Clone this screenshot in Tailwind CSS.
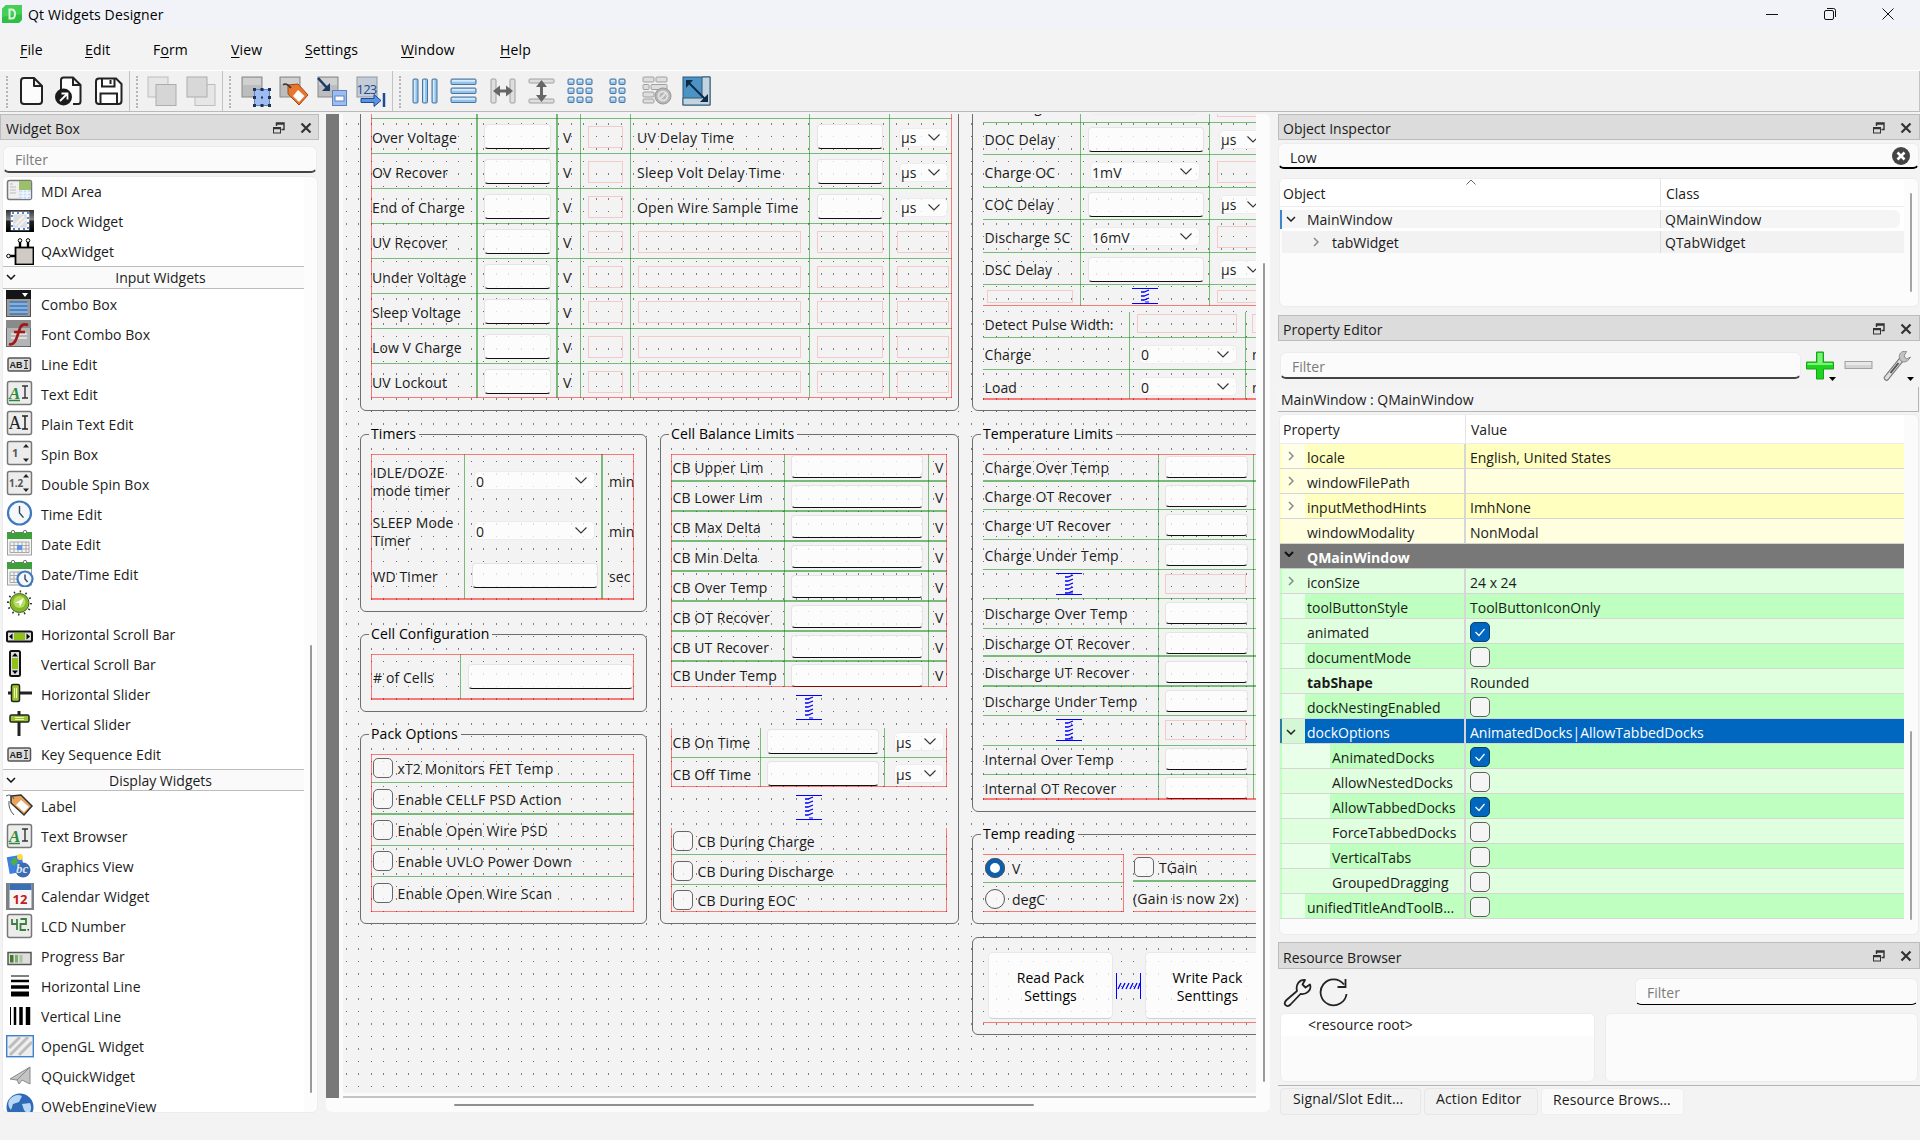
<!DOCTYPE html>
<html lang="en">
<head>
<meta charset="utf-8">
<title>Qt Widgets Designer</title>
<script src="https://cdn.jsdelivr.net/npm/@tailwindcss/browser@4"></script>
</head>
<body class="w-[1920px] h-[1140px] overflow-hidden bg-[#f3f3f3] font-['Open_Sans',sans-serif] text-[14px] leading-[18px] text-[#1b1b1b] whitespace-nowrap flex flex-col">

<!-- title bar -->
<header class="h-[28px] shrink-0 bg-[#f1f3f9] flex items-center pl-[2px] text-[14px] tracking-[0.12px]">
  <svg class="w-5 h-[18px]" viewBox="0 0 20 18"><path d="M4 0H20V15L17 18H0V4Z" fill="#2fbf45"/><path d="M4 0H20V9L0 12V4Z" fill="#45cf58"/><path d="M7.5 4.5V13.5H9.5C12 13.5 13 12 13 9S12 4.500 9.500 4.500Z" fill="none" stroke="#d9f7dc" stroke-width="2"/></svg>
  <span class="ml-[6px] mt-[2px] text-black">Qt Widgets Designer</span>
  <div class="ml-auto flex items-center pr-[26px] gap-[46px]">
    <svg class="w-3 h-3" viewBox="0 0 12 12"><path d="M0 6.500H12" stroke="#111" fill="none"/></svg>
    <svg class="w-3 h-3" viewBox="0 0 12 12"><g stroke="#111" fill="none"><rect x=".5" y="2.500" width="9" height="9" rx="1.500"/><path d="M3 .5H9.500Q11.500 .5 11.500 2.500V9"/></g></svg>
    <svg class="w-3 h-3" viewBox="0 0 12 12"><path d="M.5 .5L11.500 11.500M11.500 .5L.5 11.500" stroke="#111" fill="none"/></svg>
  </div>
</header>

<!-- menu bar -->
<nav class="h-[42px] shrink-0 flex items-center text-black pl-5 pt-[2px] tracking-[0.15px]">
  <span class="w-[65px]"><u class="underline-offset-2">F</u>ile</span>
  <span class="w-[68px]"><u class="underline-offset-2">E</u>dit</span>
  <span class="w-[78px]">F<u class="underline-offset-2">o</u>rm</span>
  <span class="w-[74px]"><u class="underline-offset-2">V</u>iew</span>
  <span class="w-[96px]"><u class="underline-offset-2">S</u>ettings</span>
  <span class="w-[99px]"><u class="underline-offset-2">W</u>indow</span>
  <span><u class="underline-offset-2">H</u>elp</span>
</nav>

<!-- tool bars -->
<div id="toolbar" class="h-[42px] shrink-0 flex border-t border-white border-b border-b-[#b9b9b9] bg-[#f1f1f1]"></div>

<main class="flex-1 flex min-h-0 pt-[2px]">
  <!-- widget box -->
  <aside class="w-[326px] shrink-0">
    <div class="w-[319px] h-[26px] bg-[#dcdcdc] border border-[#bcbcbc] flex items-center pl-[5px] pr-[6px]">
      <span class="mt-1">Widget Box</span><span class="ml-auto flex gap-[15px] mt-px dockbtns"></span>
    </div>
    <div class="ml-[3px] mt-[6px] w-[314px] h-[27px] bg-[#fbfbfb] rounded-md border border-[#ececec] border-b-2 border-b-[#444] flex items-center pl-[11px] text-[#7b7b7b]"><span class="mt-[2px]">Filter</span></div>
    <div class="ml-[2px] mt-[3px] w-[316px] h-[937px] bg-[#fcfcfc] rounded-md border border-[#ececec] flex overflow-hidden">
      <div id="widgets" class="w-[301px] bg-white"></div>
      <div class="ml-[6px] mt-[468px] w-[2px] h-[448px] bg-[#9a9a9a] rounded"></div>
    </div>
  </aside>

  <!-- form workspace -->
  <section class="w-[944px] h-[998px] shrink-0 bg-[#fcfcfc] rounded-md flex flex-col">
    <div class="flex h-[984px]">
      <div class="w-[13px] bg-[#787878]"></div>
      <div class="w-[917px] bg-[#fbfbfb] pl-[4px] flex flex-col">
        <div id="canvas" class="relative h-[979px] bg-[#f3f3f3] overflow-hidden tracking-[0.1px]">
          <svg class="absolute inset-0 w-full h-full"><defs><pattern id="dots" x="3" y="9" width="25" height="25" patternUnits="userSpaceOnUse"><g fill="#6a6a6a"><rect width="1" height="2" opacity=".85"/><rect x="12" width="1" height="2" opacity=".85"/><rect y="13" width="1" height="1"/><rect x="12" y="13" width="1" height="1"/></g></pattern></defs><rect width="100%" height="100%" fill="url(#dots)"/></svg>
        </div>
        <div class="mt-[3px] h-[2px] bg-[#c4c4c4] w-full"></div>
      </div>
      <div class="ml-[7px] mt-[149px] w-[2px] h-[819px] bg-[#9a9a9a] rounded"></div>
    </div>
    <div class="ml-[128px] mt-[6px] w-[580px] h-[2px] bg-[#909090] rounded"></div>
  </section>

  <!-- right docks -->
  <aside class="ml-[8px] w-[642px] shrink-0 flex flex-col">
    <div class="h-[26px] bg-[#dcdcdc] border border-[#bcbcbc] flex items-center pl-[4px] pr-[7px]">
      <span class="mt-1">Object Inspector</span><span class="ml-auto flex gap-[15px] mt-px dockbtns"></span>
    </div>
    <div class="mt-[3px] w-[641px] h-[26px] bg-[#fbfbfb] rounded-md border border-[#ececec] border-b-2 border-b-black flex items-center pl-[11px] pr-[8px]"><span class="mt-1">Low</span>
      <svg class="ml-auto w-[18px] h-[18px]" viewBox="0 0 18 18"><circle cx="9" cy="9" r="9" fill="#444"/><path d="M5.500 5.500L12.500 12.500M12.500 5.500L5.500 12.500" stroke="#fff" stroke-width="2.600"/></svg></div>
    <div class="ml-[1px] mt-[9px] w-[640px] h-[129px] bg-[#fcfcfc] rounded-md border border-[#ececec] flex overflow-hidden">
      <div class="w-[624px]">
        <div class="h-[28px] bg-white border-b border-[#ececec] flex items-center relative">
          <span class="w-[381px] pl-[3px] border-r border-[#e4e4e4] h-full flex items-center pt-[2px]">Object</span><span class="pl-[5px] pt-[2px]">Class</span>
          <svg class="absolute left-[186px] top-0 w-[10px] h-[6px]" viewBox="0 0 10 6"><path d="M.5 5.500L5 1L9.500 5.500" fill="none" stroke="#666"/></svg>
        </div>
        <div class="h-[24px] bg-white flex items-center">
          <span class="w-[2px] h-[19px] bg-[#3d87cf]"></span>
          <span class="w-[25px] h-[18px] bg-[#f5f5f5] flex items-center pl-[4px]"><svg class="w-[10px] h-[6px]" viewBox="0 0 10 6"><path d="M1 1L5 5L9 1" fill="none" stroke="#222" stroke-width="1.500"/></svg></span>
          <span class="w-[354px] h-[18px] bg-[#f5f5f5] border-r border-[#dcdcdc] pt-px">MainWindow</span>
          <span class="w-[239px] h-[18px] bg-[#f5f5f5] rounded-r-md pl-[4px] pt-px">QMainWindow</span>
        </div>
        <div class="h-[22px] ml-[2px] bg-[#f2f2f2] flex items-center">
          <span class="w-[379px] h-full border-r border-[#dcdcdc] flex items-center pl-[31px]"><svg class="w-[6px] h-[10px] mr-[13px]" viewBox="0 0 6 10"><path d="M1 1L5 5L1 9" fill="none" stroke="#888" stroke-width="1.500"/></svg><span class="mt-[2px]">tabWidget</span></span>
          <span class="pl-[4px] mt-[2px]">QTabWidget</span>
        </div>
      </div>
      <div class="ml-[6px] mt-[14px] w-[2px] h-[99px] bg-[#a4a4a4] rounded"></div>
    </div>
    <div class="mt-[8px] h-[26px] shrink-0 bg-[#dcdcdc] border border-[#bcbcbc] flex items-center pl-[4px] pr-[7px]">
      <span class="mt-1">Property Editor</span><span class="ml-auto flex gap-[15px] mt-px dockbtns"></span>
    </div>
    <div class="h-[46px] shrink-0 flex pl-[2px] pt-[11px]">
      <div class="w-[521px] h-[27px] bg-[#fbfbfb] rounded-md border border-[#ececec] border-b-2 border-b-[#444] flex items-center pl-[11px] text-[#7b7b7b]"><span class="mt-1">Filter</span></div>
      <svg class="ml-[5px] -mt-px w-[32px] h-[32px]" viewBox="0 0 32 32"><path d="M10.500 1H17.500V11H27.500V18H17.500V28H10.500V18H.5V11H10.500Z" fill="#1fd31f" stroke="#17a317"/><path d="M11.500 2H16.500V12H26.500V14H1.500V12H11.500Z" fill="#7df07d"/><path d="M23 26H30L26.500 30Z" fill="#000"/></svg>
      <svg class="ml-[6px] -mt-px w-[30px] h-[32px]" viewBox="0 0 30 32"><rect x="1" y="10.500" width="27" height="7" fill="#d4d4d4" stroke="#a2a2a2"/><rect x="2" y="11" width="25" height="3" fill="#e8e8e8"/></svg>
      <svg class="ml-[9px] -mt-px w-[32px] h-[32px]" viewBox="0 0 32 32"><path d="M3.500 27L18 9" stroke="#777" stroke-width="5.500" stroke-linecap="round"/><path d="M3.500 27L18 9" stroke="#dedede" stroke-width="3.500" stroke-linecap="round"/><path d="M7.500 22L15.500 12" stroke="#555" stroke-width="2"/><path d="M27.500 6L23.500 8L21 5L23.500 .5C18 -.5 15.500 3.500 16.500 7C17 12 24 13 27.500 6Z" fill="#c4c4c4" stroke="#8a8a8a"/><path d="M24 26H31L27.500 30Z" fill="#000"/></svg>
    </div>
    <div class="h-[25px] shrink-0 w-[641px] border-r border-b border-[#b4b4b4] bg-[#f4f4f4] pl-[3px] flex items-center"><span class="mt-[2px]">MainWindow : QMainWindow</span></div>
    <div class="ml-[1px] mt-[2px] w-[640px] h-[521px] shrink-0 bg-[#fbfbfb] rounded-md border border-[#ececec] flex overflow-hidden">
      <div class="w-[624px]">
        <div class="h-[29px] bg-white flex items-center border-b border-[#ececec]">
          <span class="w-[186px] h-full flex items-center pt-[2px] pl-[3px] border-r border-[#e4e4e4]">Property</span><span class="pl-[5px] pt-[2px]">Value</span>
        </div>
        <div id="props"></div>
      </div>
      <div class="ml-[6px] mt-[316px] w-[2px] h-[189px] bg-[#a4a4a4] rounded"></div>
    </div>
    <div class="mt-[7px] h-[27px] shrink-0 bg-[#dcdcdc] border border-[#bcbcbc] flex items-center pl-[4px] pr-[7px]">
      <span class="mt-1">Resource Browser</span><span class="ml-auto flex gap-[15px] dockbtns"></span>
    </div>
    <div class="h-[44px] shrink-0 flex pl-[5px] pt-[9px]">
      <svg class="w-[30px] h-[30px]" viewBox="0 0 30 30"><path d="M14 13C12.500 7 16 1.500 22 2L19.500 6.500L22.500 9.500L27 6.500C29 12 23.500 17 17.500 16L7.500 26.500Q4.500 29.500 2.500 27Q.5 25 3.500 22Z" fill="none" stroke="#222" stroke-width="1.800" stroke-linejoin="round"/></svg>
      <svg class="ml-[6px] w-[30px] h-[30px]" viewBox="0 0 30 30"><path d="M27.500 16A13 13 0 1 1 25 6.500M26.500 1V9H18.500" fill="none" stroke="#222" stroke-width="1.800"/></svg>
      <div class="ml-auto mr-[2px] w-[283px] h-[27px] bg-[#fbfbfb] rounded-md border border-[#ececec] border-b-black flex items-center pl-[11px] text-[#7b7b7b]"><span class="mt-[2px]">Filter</span></div>
    </div>
    <div class="flex gap-[10px] pl-[2px] h-[73px] shrink-0 border-b border-[#b4b4b4]">
      <div class="w-[315px] h-[69px] rounded-md border border-[#ececec] bg-[#fbfbfb] overflow-hidden"><div class="h-[22px] bg-white pl-[27px] leading-[22px]">&lt;resource root&gt;</div></div>
      <div class="w-[313px] h-[69px] rounded-md border border-[#ececec] bg-[#fbfbfb]"></div>
    </div>
    <div class="flex gap-[3px] pl-[2px] pt-[2px] h-[29px] tracking-[0.12px]">
      <span class="w-[141px] rounded border border-[#e6e6e6] bg-[#f2f2f2] pl-[12px] pt-[1px]">Signal/Slot Edit...</span>
      <span class="w-[114px] rounded border border-[#e6e6e6] bg-[#f2f2f2] pl-[11px] pt-[1px]">Action Editor</span>
      <span class="w-[143px] rounded border border-[#efefef] bg-[#fafafa] pl-[11px] pt-[2px]">Resource Brows...</span>
    </div>
  </aside>
</main>

<script>
/* ---------- dock title buttons ---------- */
document.querySelectorAll('.dockbtns').forEach(e => e.innerHTML =
  `<svg class="w-[12px] h-[12px]" viewBox="0 0 12 12"><g fill="none" stroke="#333"><rect x=".5" y="5.500" width="7" height="5.500"/><path d="M.5 6.500H7.500M3.500 4V1H11V7.500H8.500M3.500 2H11" stroke-width="1.400"/></g></svg>
   <svg class="w-[12px] h-[12px]" viewBox="0 0 12 12"><path d="M1.500 1.500L10.500 10.500M10.500 1.500L1.500 10.500" stroke="#333" stroke-width="2.200"/></svg>`);

/* ---------- tool bar ---------- */
const gray = '<rect x="1" y="1" width="20" height="20" fill="#bdbdbd" stroke="#8a8a8a"/><rect x="2" y="2" width="18" height="7" fill="#d0d0d0"/>';
const bluebar = (x, y, w, h) => `<rect x="${x}" y="${y}" width="${w}" height="${h}" rx="1" fill="#8fc3f0" stroke="#4f7396"/><rect x="${x + 1}" y="${y + 1}" width="${Math.max(1, w > h ? w - 2 : w / 2 - 1)}" height="${Math.max(1, h > w ? h - 2 : h / 2 - 1)}" fill="#d6ebfb"/>`;
const gbar = (x, y, w, h) => `<rect x="${x}" y="${y}" width="${w}" height="${h}" rx="1" fill="#dedede" stroke="#a0a0a0"/>`;
let cellsGrid = '', cellsForm = '', cellsBreak = '';
for (let r = 0; r < 3; r++) {
  for (let c = 0; c < 3; c++) cellsGrid += bluebar(2 + c * 9, 3 + r * 9, 6, 5.5);
  cellsForm += bluebar(7, 3 + r * 9, 6, 5.5) + bluebar(16, 3 + r * 9, 6, 5.5);
}
[[1,1,11,5],[14,1,11,5],[1,8.5,6,5],[9,8.5,16,5],[1,16,11,5],[1,23,11,4]].forEach(a => cellsBreak += gbar(...a));
const T = {
  file: '<path d="M5 2H15L23 10V25Q23 28 20 28H5Q2 28 2 25V5Q2 2 5 2ZM15 2V10H23" fill="#fcfcfc" stroke="#222" stroke-width="2" stroke-linejoin="round"/>',
  open: '<path d="M7 14V4Q7 1.500 9.500 1.500H19L26.500 9V25.500Q26.500 28 24 28H19M19 1.500V9H26.500" fill="#fcfcfc" stroke="#222" stroke-width="2"/><circle cx="9.500" cy="21" r="8.500" fill="#1a1a1a"/><path d="M6 25L13 18M7.500 17.500H13.500V23.500" stroke="#fff" stroke-width="1.800" fill="none"/>',
  save: '<path d="M4 2.500H21L26.500 8V25Q26.500 28 23.500 28H4Q1 28 1 25V5.500Q1 2.500 4 2.500Z" fill="#fff" stroke="#222" stroke-width="2"/><path d="M7 2.500V10.500H19.500V2.500M5.500 28V17.500H22V28M15.500 4V8" fill="none" stroke="#222" stroke-width="2"/>',
  back: '<rect x="1" y="1" width="20" height="20" fill="#e6e6e6" stroke="#bdbdbd"/><rect x="9" y="8.500" width="20" height="21" fill="#d6d6d6" stroke="#adadad"/>',
  front: '<rect x="9" y="8.500" width="20" height="21" fill="#e6e6e6" stroke="#bdbdbd"/><rect x="1" y="1" width="20" height="20" fill="#d8d8d8" stroke="#adadad"/>',
  edit: gray + '<rect x="13.500" y="13.500" width="15" height="16" fill="#9dbdf0" stroke="#5f82bd"/><g fill="#1f3358"><rect x="12" y="12" width="3" height="3"/><rect x="19.500" y="12" width="3" height="3"/><rect x="27" y="12" width="3" height="3"/><rect x="12" y="20" width="3" height="3"/><rect x="27" y="20" width="3" height="3"/><rect x="12" y="28" width="3" height="3"/><rect x="19.500" y="28" width="3" height="3"/><rect x="27" y="28" width="3" height="3"/><rect x="20" y="20.500" width="2" height="2"/></g>',
  signal: gray + '<path d="M9 9L19 8L29 19L20 29L9 18Z" fill="#e8762c" stroke="#9a4a16"/><path d="M19 14L25.500 20L20 26L14 20Z" fill="#fff"/><path d="M4 9Q7 6 12 12" fill="none" stroke="#333" stroke-width="1.500"/>',
  buddy: gray + '<rect x="15.500" y="14.500" width="14" height="15" fill="#9dbdf0" stroke="#5f82bd"/><rect x="18" y="20" width="9" height="5" fill="#fff" stroke="#5f82bd"/><path d="M1 2L11 13" stroke="#1d3a66" stroke-width="2.600"/><path d="M13 7V15H5Z" fill="#1d3a66"/>',
  tab: '<rect x="1" y="1" width="20" height="20" fill="#c4ccd6" stroke="#8d97a5"/><text x=".5" y="18" font-family="Open Sans" font-size="13" letter-spacing="-.8" fill="#1c4a94">123</text><path d="M5 22.500H18V18.500L25 24.500L18 30.500V26.500H5Z" fill="#5b93e0" stroke="#1c4a94"/><path d="M28 17V31" stroke="#1c4a94" stroke-width="2.500"/>',
  cols: bluebar(2, 3, 5, 24) + bluebar(11.5, 3, 5, 24) + bluebar(21, 3, 5, 24),
  rows: bluebar(2, 3, 25, 5.5) + bluebar(2, 12, 25, 5.5) + bluebar(2, 21, 25, 5.5),
  hs: gbar(2, 3, 5, 24) + gbar(21, 3, 5, 24) + '<path d="M4 15L11 9.500V13.500H17V9.500L24 15L17 20.500V16.500H11V20.500Z" fill="#666"/>',
  vs: gbar(2, 3, 25, 4) + gbar(2, 23, 25, 4) + '<path d="M14.500 4L20 11H16V19H20L14.500 26L9 19H13V11H9Z" fill="#666"/>',
  grid: cellsGrid, form: cellsForm,
  brk: cellsBreak + '<circle cx="21" cy="20" r="8" fill="#b5b5b5" stroke="#999"/><circle cx="21" cy="20" r="4.500" fill="none" stroke="#e0e0e0" stroke-width="2"/><path d="M18 23L24 17" stroke="#e0e0e0" stroke-width="2"/>',
  adj: '<rect x="1" y="1" width="27" height="28" fill="#4a93c4" stroke="#2f5877"/><path d="M20 1H28V29H1V22H20Z" fill="#c3d3df" stroke="#2f5877"/><path d="M6 6L23 23" stroke="#0f2c44" stroke-width="2"/><path d="M4 4H11L4 12ZM26 26H18L26 18Z" fill="#0f2c44"/>'
};
const bars = [
  [130, [['file', 19], ['open', 54], ['save', 95]]],
  [93, [['back', 147], ['front', 186]]],
  [170, [['edit', 241], ['signal', 279], ['buddy', 317], ['tab', 356]]],
  [1527, [['cols', 411], ['rows', 449], ['hs', 489], ['vs', 527], ['grid', 566], ['form', 603], ['brk', 642], ['adj', 682]]]
];
let barX = 0;
document.getElementById('toolbar').innerHTML = bars.map(([w, items]) => {
  let cur = barX + 9;
  const html = items.map(([n, x]) => {
    const m = x - cur; cur = x + 31;
    return `<svg class="w-[31px] h-[31px] shrink-0 mt-[5px]" style="margin-left:${m}px" viewBox="0 0 31 31">${T[n]}</svg>`;
  }).join('');
  barX += w;
  return `<div class="flex shrink-0 border-r border-[#c2c2c2] pl-[6px]" style="width:${w}px"><span class="w-[3px] shrink-0 mt-[5px] h-[32px] border-l-2 border-dotted border-[#b5b5b5]"></span>${html}</div>`;
}).join('');

/* ---------- widget box ---------- */
const frame = '<rect x="1.500" y="1.500" width="24" height="23" rx="2" fill="#ececec" stroke="#777" stroke-width="1.500"/>';
const serif = 'font-family="Liberation Serif"';
const green = 'fill="#9ac52f" stroke="#222" stroke-width="1.500"';
const clock = (cx, cy, r) => `<circle cx="${cx}" cy="${cy}" r="${r}" fill="#f4f7fb" stroke="#3f78bd" stroke-width="2.200"/><path d="M${cx} ${cy - r * .6}V${cy}L${cx + r * .35} ${cy + r * .4}" fill="none" stroke="#345" stroke-width="1.400"/>`;
const cal = '<rect x="1.500" y="4" width="24" height="21" fill="#f4f4f4" stroke="#a0a0a0"/><rect x="1" y="2" width="25" height="7" fill="#3f9f3a"/><circle cx="7" cy="2" r="1.700" fill="#eee" stroke="#777"/><circle cx="19" cy="2" r="1.700" fill="#eee" stroke="#777"/><path d="M4 12H23M4 15.500H23M4 19H23M4 22.500H23M4 12V22.500M8 12V22.500M12 12V22.500M16 12V22.500M20 12V22.500M23 12V22.500" stroke="#a9a9a9"/>';
const abi = '<rect x="2" y="8" width="22.500" height="13" rx="1.500" fill="#dcdcdc" stroke="#555" stroke-width="1.500"/><text x="3.500" y="18" font-family="Liberation Sans" font-size="9" font-weight="bold" fill="#222">AB</text><path d="M18 10.500H22M20 10.500V18.500M18 18.500H22" stroke="#222"/>';
const I = {
  mdi: '<rect x="1.500" y="2.500" width="24" height="19" rx="2" fill="#f0f0f0" stroke="#777" stroke-width="1.500"/><rect x="13" y="3" width="12" height="9" fill="#9cc06a"/><rect x="13" y="12.500" width="12" height="8.500" fill="#c9dbf5"/><path d="M13 15H25M13 18H25M17 12V21M21 12V21" stroke="#fff"/><path d="M4 6H7M4 9H10M4 12H10M4 15H10" stroke="#bbb"/>',
  dock: '<defs><linearGradient id="dk" x2="0" y2="1"><stop offset="0" stop-color="#333"/><stop offset=".45" stop-color="#8a8a8a"/><stop offset=".5" stop-color="#222"/><stop offset="1" stop-color="#000"/></linearGradient></defs><rect y="2" width="28" height="22" fill="url(#dk)"/><rect x="6" y="5" width="16" height="16" fill="#dedede" stroke="#fff" stroke-width="2.500"/><rect x="6" y="5" width="16" height="16" fill="none" stroke="#4f86d8" stroke-width="1.800" stroke-dasharray="2 3"/><path d="M9 17L18 8M12 19L20 11" stroke="#f2f2f2" stroke-width="2"/>',
  ax: '<rect x="9.500" y="9.500" width="18" height="17" fill="#cfcbc4" stroke="#000" stroke-width="1.800"/><path d="M14 9V4M22 9V4M9 18H4" stroke="#000" stroke-width="2.400"/><circle cx="14" cy="2.500" r="1.800" fill="#fff" stroke="#000"/><circle cx="22" cy="2.500" r="1.800" fill="#fff" stroke="#000"/><circle cx="2.500" cy="18" r="1.800" fill="#fff" stroke="#000"/>',
  combo: '<rect x=".5" y="0" width="24" height="26.500" fill="#9a9a9a" stroke="#555"/><rect width="25" height="9" fill="#151515"/><path d="M16 3H22L19 7Z" fill="#fff"/><rect x="3.500" y="12" width="18" height="12" fill="#7fb0e6"/><path d="M3.500 12H21.500M3.500 16H21.500M3.500 20H21.500M3.500 24H21.500" stroke="#4a74a5" stroke-width="1.300"/>',
  font: `<rect x=".5" y=".5" width="24" height="26" fill="#b4b4b4" stroke="#666"/><rect width="25" height="8" fill="#8a8a8a"/><path d="M5 14H21M5 18H21" stroke="#ddd" stroke-width="2"/><path d="M3 24Q8 26 11 17L14 8Q16 3 22 5M8 12H19" fill="none" stroke="#a01818" stroke-width="2.600"/>`,
  line: abi,
  text: frame + `<text x="3" y="18.500" ${serif} font-size="17" font-weight="bold" font-style="italic" fill="#2c8a3c">A</text><path d="M3 20.500H14" stroke="#2c8a3c" stroke-width="1.500"/><path d="M16 6H22M19 6V18M16 18H22" stroke="#333" stroke-width="1.400"/>`,
  plain: frame + `<text x="2.500" y="19" ${serif} font-size="18" fill="#222">A</text><path d="M16 6H22M19 6V19M16 19H22" stroke="#222" stroke-width="1.500"/>`,
  spin: frame + '<text x="6" y="17" font-family="Open Sans" font-size="11" font-weight="bold" fill="#555">1</text><path d="M17 7.500H23L20 4ZM17 18.500H23L20 22Z" fill="#222"/>',
  dspin: frame + '<text x="3" y="17" font-family="Open Sans" font-size="10" font-weight="bold" fill="#555">1.2</text><path d="M17 7.500H23L20 4ZM17 18.500H23L20 22Z" fill="#222"/>',
  time: clock(13.5, 13, 11.5),
  date: cal + '<rect x="11" y="15" width="5" height="5" fill="#5d94e8"/>',
  dt: cal + clock(19, 19, 7.5),
  dial: '<circle cx="13.500" cy="13" r="11.500" fill="none" stroke="#333" stroke-width="2" stroke-dasharray="1.500 4.500"/><circle cx="13.500" cy="13" r="9.500" fill="#86b82e" stroke="#44611a"/><circle cx="13.500" cy="12" r="6" fill="#b7dd5c"/><path d="M9 13L18 8L14 17L13 13Z" fill="#fff"/>',
  hsb: '<rect x="1" y="11.500" width="25" height="10" rx="1.500" fill="#ddd" stroke="#111" stroke-width="2"/><rect x="8" y="13" width="11" height="7" fill="#8fc11a"/><path d="M6.500 13.500V19.500L3 16.500ZM20.500 13.500V19.500L24 16.500Z" fill="#000"/>',
  vsb: '<rect x="4" y="1" width="10" height="25" rx="1.500" fill="#ddd" stroke="#111" stroke-width="2"/><rect x="6" y="8" width="6" height="11" fill="#8fc11a"/><path d="M6 6.500H12L9 3ZM6 20.500H12L9 24Z" fill="#000"/>',
  hsl: `<path d="M2 13H26" stroke="#222" stroke-width="3"/><rect x="5.500" y="4.500" width="8" height="17" rx="1.500" ${green}/><path d="M8.500 8V18M10.500 8V18" stroke="#eaf7b8"/>`,
  vsl: `<path d="M13 1V26" stroke="#222" stroke-width="3"/><rect x="4" y="5" width="19" height="7" rx="1.500" ${green}/><path d="M9 7.500H18M9 9.500H18" stroke="#eaf7b8"/>`,
  label: '<path d="M5 3L15 2L26 13L18 22L5 10Z" fill="#e8a35c" stroke="#333" stroke-width="1.500"/><path d="M15 7L23 14L18 19L10 12Z" fill="#fff"/><path d="M0 3Q5 0 8 6M3 8Q2 16 8 22" fill="none" stroke="#555"/>',
  gv: '<rect x="2" y="3" width="15" height="17" fill="#3f7fe0" transform="rotate(-10 9 11)"/><path d="M4 9L9 4L12 9L8 13Z" fill="#4cb045"/><circle cx="14" cy="4" r="3" fill="#ffd94a"/><circle cx="17" cy="17" r="7.500" fill="#3c6bb0"/><text x="10" y="20" font-family="Liberation Serif" font-size="13" font-weight="bold" font-style="italic" fill="#dbe6f7">bc</text>',
  cw: '<rect x="0" y="0" width="28" height="27" fill="#7b8085"/><rect x="3.500" y="1" width="22" height="24" fill="#f6f6f6"/><rect x="3.500" y="1" width="22" height="6" fill="#3a6fb5"/><text x="6.500" y="21" font-family="Open Sans" font-size="13" font-weight="bold" fill="#c02020">12</text>',
  lcd: frame + '<path d="M6 6V11H11M11 6V17M14.500 6H20V11H14.500V17H20" fill="none" stroke="#3c7f3c" stroke-width="1.800"/><rect x="21.500" y="16" width="1.500" height="1.500" fill="#333"/>',
  pb: '<rect x="2" y="9.500" width="23" height="12" fill="#dedede" stroke="#555" stroke-width="1.500"/><rect x="4" y="12" width="3.500" height="7.500" fill="#3f7d28"/><rect x="9" y="12" width="3" height="7.500" fill="#7fae6c"/><rect x="13.500" y="12" width="3" height="7.500" fill="#a9c69c"/>',
  hl: '<path d="M5 3H23" stroke="#000"/><path d="M5 8H23" stroke="#000" stroke-width="2.500"/><path d="M5 14H23" stroke="#000" stroke-width="3.500"/><path d="M5 21H23" stroke="#000" stroke-width="5"/>',
  vl: '<path d="M4.500 4V22" stroke="#000"/><path d="M9 4V22" stroke="#000" stroke-width="2.500"/><path d="M15 4V22" stroke="#000" stroke-width="3.500"/><path d="M22 4V22" stroke="#000" stroke-width="4.500"/>',
  gl: '<rect x=".7" y="2.700" width="26.600" height="21" fill="#eee" stroke="#3f7fd0" stroke-width="1.400"/><path d="M3 15L14 4M4 22L22 4M13 22L26 9" stroke="#bdbdbd" stroke-width="3"/>',
  qq: '<path d="M4 16L24 4V21L16 17L13 21L11 17Z" fill="#c4c4c4" stroke="#8a8a8a"/><path d="M24 4L11 17" stroke="#888"/>',
  web: '<circle cx="14" cy="14" r="13.500" fill="#2f6ab8"/><path d="M4 6Q10 0 16 3L13 9L7 11L5 17Q0 11 4 6ZM16 11L24 10Q27 16 22 22L18 17Z" fill="#b8d8f5"/>'
};
const row = ([i, t]) => `<div class="h-[30px] flex items-center pl-[3px]"><svg class="w-[28px] h-[27px] shrink-0" viewBox="0 0 28 27">${I[i]}</svg><span class="ml-[7px] mt-[2px] tracking-[0.05px]">${t}</span></div>`;
const head = t => `<div class="h-[22.500px] border-y border-[#bdbdbd] bg-[#fafafa] flex items-center"><svg class="w-[10px] h-[6px] ml-[3px]" viewBox="0 0 10 6"><path d="M1 1L5 5L9 1" fill="none" stroke="#111" stroke-width="1.500"/></svg><span class="flex-1 text-center pl-[1px] pt-[2px]">${t}</span></div>`;
document.getElementById('widgets').innerHTML = '<div class="-mt-[1px]"></div>' +
  [['mdi', 'MDI Area'], ['dock', 'Dock Widget'], ['ax', 'QAxWidget']].map(row).join('') + head('Input Widgets') +
  [['combo', 'Combo Box'], ['font', 'Font Combo Box'], ['line', 'Line Edit'], ['text', 'Text Edit'], ['plain', 'Plain Text Edit'], ['spin', 'Spin Box'], ['dspin', 'Double Spin Box'], ['time', 'Time Edit'], ['date', 'Date Edit'], ['dt', 'Date/Time Edit'], ['dial', 'Dial'], ['hsb', 'Horizontal Scroll Bar'], ['vsb', 'Vertical Scroll Bar'], ['hsl', 'Horizontal Slider'], ['vsl', 'Vertical Slider'], ['line', 'Key Sequence Edit']].map(row).join('') + head('Display Widgets') +
  [['label', 'Label'], ['text', 'Text Browser'], ['gv', 'Graphics View'], ['cw', 'Calendar Widget'], ['lcd', 'LCD Number'], ['pb', 'Progress Bar'], ['hl', 'Horizontal Line'], ['vl', 'Vertical Line'], ['gl', 'OpenGL Widget'], ['qq', 'QQuickWidget'], ['web', 'QWebEngineView']].map(row).join('');

/* ---------- property table ---------- */
const on = '<span class="w-5 h-5 rounded-[5px] bg-[#0067c0] border border-[#11406b] flex items-center justify-center"><svg class="w-3 h-3" viewBox="0 0 12 12"><path d="M1.500 6L5 9.500L10.500 3" fill="none" stroke="#fff" stroke-width="1.200"/></svg></span>';
const off = '<span class="w-5 h-5 rounded-[5px] bg-[#f5f5f5] border border-[#5f5f5f]"></span>';
const chevR = '<svg class="w-[6px] h-[10px] ml-[6px]" viewBox="0 0 6 10"><path d="M1 1L5 5L1 9" fill="none" stroke="#888" stroke-width="1.500"/></svg>';
const chevD = '<svg class="w-[10px] h-[6px] ml-[4px] mt-px" viewBox="0 0 10 6"><path d="M1 1L5 5L9 1" fill="none" stroke="#222" stroke-width="1.500"/></svg>';
const props = [
  ['Y', 'locale', 'English, United States', '>'], ['y', 'windowFilePath', '', '>'], ['Y', 'inputMethodHints', 'ImhNone', '>'], ['y', 'windowModality', 'NonModal'],
  ['H', 'QMainWindow'],
  ['g', 'iconSize', '24 x 24', '>'], ['G', 'toolButtonStyle', 'ToolButtonIconOnly'], ['g', 'animated', on], ['G', 'documentMode', off], ['g', '<b>tabShape</b>', 'Rounded'], ['G', 'dockNestingEnabled', off],
  ['S', 'dockOptions', 'AnimatedDocks|AllowTabbedDocks'],
  ['G', 'AnimatedDocks', on, 2], ['g', 'AllowNestedDocks', off, 2], ['G', 'AllowTabbedDocks', on, 2], ['g', 'ForceTabbedDocks', off, 2], ['G', 'VerticalTabs', off, 2], ['g', 'GroupedDragging', off, 2], ['G', 'unifiedTitleAndToolB...', off]
];
const bg = { Y: 'bg-[#ffffbf]', y: 'bg-[#ffffdf]', G: 'bg-[#bfffbf]', g: 'bg-[#dfffdf]', S: 'bg-[#0067c0] text-white' };
const ind = { Y: 'bg-[#ffffe9] border-[#ffffbf]', y: 'bg-[#ffffdf] border-[#ffffbf]', G: 'bg-[#e9ffe9] border-[#bfffbf]', g: 'bg-[#dfffdf] border-[#bfffbf]', S: 'bg-[#d5f7d5] border-[#2a7f9c]' };
document.getElementById('props').innerHTML = props.map(([k, n, v, x]) => k === 'H'
  ? `<div class="h-[25px] bg-[#787878] text-white font-bold flex items-center border-b border-[#c8c8c8]"><svg class="w-[10px] h-[6px] ml-[4px] mr-[13px] -mt-[4px]" viewBox="0 0 10 6"><path d="M1 1L5 5L9 1" fill="none" stroke="#111" stroke-width="2"/></svg><span class="mt-[3px]">${n}</span></div>`
  : `<div class="h-[25px] flex border-b border-[#d6d6d6] ${bg[k]}"><span class="${x === 2 ? 'w-[50px]' : 'w-[25px]'} shrink-0 border-l-2 flex items-center ${ind[k]}">${k === 'S' ? chevD : x === '>' ? chevR : ''}</span><span class="${x === 2 ? 'w-[136px]' : 'w-[161px]'} shrink-0 border-r-2 border-[#d6d6d6] pl-[2px] pt-[5px] overflow-hidden">${n}</span><span class="pl-[4px] flex ${v && v[0] === '<' ? 'pt-[3px]' : 'pt-[5px]'}">${v}</span></div>`).join('');

/* ---------- form being designed ---------- */
const canvas = document.getElementById('canvas');
const OX = 343, OY = 114;               // workspace origin on the desktop
const GREEN = 'rgba(0,128,0,.5)', RED = 'rgba(255,0,0,.5)';
const add = h => canvas.insertAdjacentHTML('beforeend', h);
const at = (x, y, w, h) => `left:${x - OX}px;top:${y - OY}px;width:${w}px;height:${h}px`;

const group = (x, y, w, h, title) => add(`<div class="absolute rounded-[6px] border-[1.500px] border-[#6e6e6e]" style="${at(x, y, w, h)}">${title ? `<span class="absolute left-[8px] -top-[10px] h-[19px] pl-[2px] pr-[3px] bg-[#f3f3f3] text-black">${title}</span>` : ''}</div>`);

const L = t => `<span class="leading-[17.500px] mt-[2px]">${t}</span>`;
const E = (h = 25) => `<span class="flex-1 rounded-[4px] border border-[#e4e4e4] border-b-[1.500px] border-b-[#111] bg-white/75" style="height:${h}px"></span>`;
const C = t => `<span class="flex-1 h-[19px] rounded-[5px] border border-[#ededed] bg-white/75 flex items-center pl-px pr-[7px]"><span class="mt-[2px]">${t}</span><svg class="ml-auto w-[12px] h-[7px]" viewBox="0 0 12 7"><path d="M.5 .5L6 6L11.500 .5" fill="none" stroke="#333" stroke-width="1.100"/></svg></span>`;
const X = (h = 22) => `<span class="flex-1 border border-[#f3caca]" style="height:${h}px"></span>`;
const K = t => `<span class="w-5 h-5 shrink-0 rounded-[5px] border border-[#666] bg-[#f8f8f8]/80"></span><span class="ml-[5px] mt-[2px]">${t}</span>`;
const R = (t, c) => `<span class="w-5 h-5 shrink-0 rounded-full border ${c ? 'border-[5px] border-[#0a5fae] bg-white outline -outline-offset-1 outline-[#555]' : 'border-[#555] bg-[#f8f8f8]/80'}"></span><span class="ml-[7px] mt-[2px]">${t}</span>`;
const vspring = (h, cls = '') => {
  let z = ''; for (let y = 3; y < h - 2; y += 4) z += `M9 ${y + 1}H12L17 ${y - 1}`;
  return `<svg class="w-[26px] ${cls}" style="height:${h}px" viewBox="0 0 26 ${h}"><path d="M0 .5H26M0 ${h - .5}H26M13 ${h - 2}H17" stroke="#00f" stroke-width="1"/><path d="${z}" stroke="#00f" stroke-width="1.300" fill="none"/></svg>`;
};

/* A layout: columns are [width, padLeft, padRight]; sides lists the outline edges drawn in red;
   dy nudges the content of each row off its centre. */
function layout(x, y, cols, rows, cells, { sides = '', boldC = [], boldR = [], noR, noC, boldB, dy = 0 } = {}) {
  const W = cols.reduce((a, c) => a + c[0], 0), H = rows.reduce((a, b) => a + b, 0);
  let s = '', p = 0;
  if (!noC) cols.slice(0, -1).forEach((c, i) => { p += c[0]; const b = boldC.includes(i); s += `<rect x="${b ? p - 1 : p}" y="0" width="${b ? 2 : 1}" height="${H}" fill="${GREEN}"/>`; });
  p = 0;
  if (!noR) rows.slice(0, -1).forEach((r, i) => { p += r; const b = boldR.includes(i); s += `<rect x="0" y="${b ? p - 1 : p}" width="${W}" height="${b ? 2 : 1}" fill="${GREEN}"/>`; });
  if (sides.includes('t')) s += `<rect width="${W}" height="1" fill="${RED}"/>`;
  if (sides.includes('b')) s += `<rect y="${H - 1}" width="${W}" height="${boldB ? 2 : 1}" fill="${RED}"/>`;
  if (sides.includes('l')) s += `<rect width="1" height="${H}" fill="${RED}"/>`;
  if (sides.includes('r')) s += `<rect x="${W - 1}" width="1" height="${H}" fill="${RED}"/>`;
  const body = cells.map((r, j) => {
    const d = 2 * (Array.isArray(dy) ? dy[j] : dy);
    return r.map((c, i) => `<div class="flex items-center min-w-0" style="padding:${Math.max(0, d)}px ${cols[i][2] || 0}px ${Math.max(0, -d)}px ${cols[i][1] || 0}px">${c}</div>`).join('');
  }).join('');
  add(`<div class="absolute" style="${at(x, y, W, H)}"><div class="grid" style="grid-template-columns:${cols.map(c => c[0] + 'px').join(' ')};grid-template-rows:${rows.map(r => r + 'px').join(' ')}">${body}</div><svg class="absolute left-0 top-0 w-full overflow-visible" style="height:${H}px">${s}</svg></div>`);
}
const rep = (n, v) => Array(n).fill(v);

// voltage limits
group(360, 60, 599, 351);
const colsA = [[106, 1], [80, 7, 6], [23, 7], [50, 8, 7], [179, 8, 8], [80, 8, 6], [63, 8, 3]];
const volts = ['Over Voltage', 'OV Recover', 'End of Charge', 'UV Recover', 'Under Voltage', 'Sleep Voltage', 'Low V Charge', 'UV Lockout'];
const delays = ['UV Delay Time', 'Sleep Volt Delay Time', 'Open Wire Sample Time'];
layout(371, 83, colsA, rep(9, 35), [rep(7, '')].concat(volts.map((v, i) => [L(v), E(), `<span class="-ml-px flex">${L('V')}</span>`, X(), ...(i < 3 ? [`<span class="-ml-px flex tracking-[0.2px]">${L(delays[i])}</span>`, E(), `<span class="flex flex-1 pl-[2px] pr-[1px] pt-px">${C('µs')}</span>`] : [X(), X(), X()])])), { sides: 'lrb', boldC: [0, 1], dy: 1 });

// current limits
group(972, 60, 400, 351);
const colsB = [[97, 1.5], [129, 8, 5], [80, 8, 0]];
const us = `<span class="flex w-[48px] ml-[2px]">${C('µs')}</span>`;
const cb = t => `<span class="flex flex-1 pl-[2px] pr-[4px]">${C(t)}</span>`;
layout(983, 89, colsB, [33, 32, 33, 32, 33, 32, 22], [
  [L('Discharge OC'), cb(''), X()],
  [L('DOC Delay'), E(), us], [L('Charge OC'), cb('1mV'), X()], [L('COC Delay'), E(), us], [L('Discharge SC'), cb('16mV'), X()], [L('DSC Delay'), E(), us],
  [`<span class="flex flex-1 pl-[2px] pr-[7px]">${X(13)}</span>`, vspring(16, 'ml-[44px]'), X(13)]], { sides: 'b', dy: [0, 1, 1, 1, 1, 1, 1] });
layout(983, 312, [[146, 1.5], [116, 8, 8], [60, 7, 0]], [25, 32, 30], [
  [L('Detect Pulse Width:'), X(19), X(19)],
  [L('Charge'), `<span class="flex flex-1 pl-[2px]">${C('0')}</span>`, L('min')],
  [L('Load'), `<span class="flex flex-1 pl-[2px]">${C('0')}</span>`, L('min')]], { sides: 'b', boldB: 1, dy: [-1, 1, 2.5] });

// timers
group(360, 434, 287, 178, 'Timers');
layout(371, 454, [[93, 1.5], [138, 8, 4], [32, 7]], [52, 50, 43], [
  [L('IDLE/DOZE<br>mode timer'), `<span class="flex flex-1 pl-[2px] pr-[3px]">${C('0')}</span>`, L('min')],
  [L('SLEEP Mode<br>Timer'), `<span class="flex flex-1 pl-[2px] pr-[3px]">${C('0')}</span>`, L('min')],
  [L('WD Timer'), E(), L('sec')]], { sides: 'tlrb', boldC: [1], noR: 1, boldB: 1, dy: [0.5, -0.5, -2] });

// cell configuration
group(360, 634, 287, 78, 'Cell Configuration');
layout(371, 654, [[89, 2], [174, 8, 1]], [45], [[L('# of Cells'), E()]], { sides: 'tlrb', boldB: 1 });

// pack options
group(360, 734, 287, 190, 'Pack Options');
layout(371, 754, [[263, 1.5]], [28, 32, 31, 31, 36], ['xT2 Monitors FET Temp', 'Enable CELLF PSD Action', 'Enable Open Wire PSD', 'Enable UVLO Power Down', 'Enable Open Wire Scan'].map(t => [`<span class="flex tracking-[0.15px]">${K(t)}</span>`]), { sides: 'tlrb', boldR: [1], dy: [0, 1, 0.5, 0.5, -1.5] });

// cell balance limits
group(660, 434, 299, 490, 'Cell Balance Limits');
layout(671, 454, [[113, 1.5], [144, 7, 5], [19, 7]], [27, 30, 30, 30, 30, 30, 30, 26], ['CB Upper Lim', 'CB Lower Lim', 'CB Max Delta', 'CB Min Delta', 'CB Over Temp', 'CB OT Recover', 'CB UT Recover', 'CB Under Temp'].map(t => [L(t), E(23), L('V')]), { sides: 'tlrb', boldR: [0, 1, 2, 3, 4, 5, 6], dy: [-1, 0.5, 0.5, 0.5, 0.5, 0.5, 0.5, 1] });
add(`<div class="absolute" style="${at(796, 695, 26, 25)}">${vspring(25)}</div>`);
layout(671, 728, [[89, 1.5], [124, 7, 5], [63, 10, 3]], [29, 30], [[L('CB On Time'), E(), C('µs')], [L('CB Off Time'), E(), C('µs')]], { sides: 'lrb', dy: [-1, 1.5] });
add(`<div class="absolute" style="${at(796, 795, 26, 25)}">${vspring(25)}</div>`);
layout(671, 828, [[276, 1.5]], [26, 30, 28], ['CB During Charge', 'CB During Discharge', 'CB During EOC'].map(t => [K(t)]), { sides: 'lrb', dy: [-0.5, 1.5, 2] });

// temperature limits
group(972, 434, 400, 378, 'Temperature Limits');
const temps = ['Charge Over Temp', 'Charge OT Recover', 'Charge UT Recover', 'Charge Under Temp', 0, 'Discharge Over Temp', 'Discharge OT Recover', 'Discharge UT Recover', 'Discharge Under Temp', 0, 'Internal Over Temp', 'Internal OT Recover'];
layout(983, 454, [[175, 1.5], [95, 7, 5], [60]], [27, 28, 30, 30, 29, 30, 28, 30, 29, 30, 29, 25], temps.map(t => t ? [`<span class="flex tracking-[0.15px]">${L(t)}</span>`, E(22), ''] : [vspring(22, 'ml-[71px]'), `<span class="flex flex-1 pr-[2px]">${X(20)}</span>`, '']), { sides: 'tb', boldR: [0, 6, 7], boldB: 1, dy: [-1, 1, 1, 0.5, 0, 0, 0.5, 0.5, 0, 0, -0.5, 1] });

// temperature reading
group(972, 834, 400, 90, 'Temp reading');
layout(983, 854, [[141, 2]], [28, 30], [[R('V', 1)], [R('degC')]], { sides: 'trb', dy: [-0.5, 1.5] });
layout(1133, 854, [[180, 0]], [27, 31], [[`<span class="flex pl-px">${K('TGain')}</span>`], [`<span class="flex tracking-[0.2px]">${L('(Gain is now 2x)')}</span>`]], { sides: 'tb', boldR: [0], dy: [-1, 1.5] });

// pack buttons
group(972, 937, 400, 98);
const B = t => `<span class="flex-1 h-[67px] rounded-[5px] border border-[#e8e8e8] border-b-[#cfcfcf] bg-white/75 flex items-center justify-center text-center leading-[18px] pt-[2px] text-black">${t}</span>`;
layout(983, 948, [[135, 5, 5], [22], [135, 5, 5]], [75], [[B('Read Pack<br>Settings'),
  '<svg class="w-[26px] h-[26px] -ml-[2px] shrink-0" viewBox="0 0 26 26"><path d="M.5 0V26M24.500 0V26" stroke="#00f"/><path d="M2 16L5 10M6 16L9 10M10 16L13 10M14 16L17 10M18 16L21 10M22 16L24 10" stroke="#00f" stroke-width="1.300"/></svg>',
  B('Write Pack<br>Senttings')]], { sides: 'b', noC: 1 });
</script>
</body>
</html>
